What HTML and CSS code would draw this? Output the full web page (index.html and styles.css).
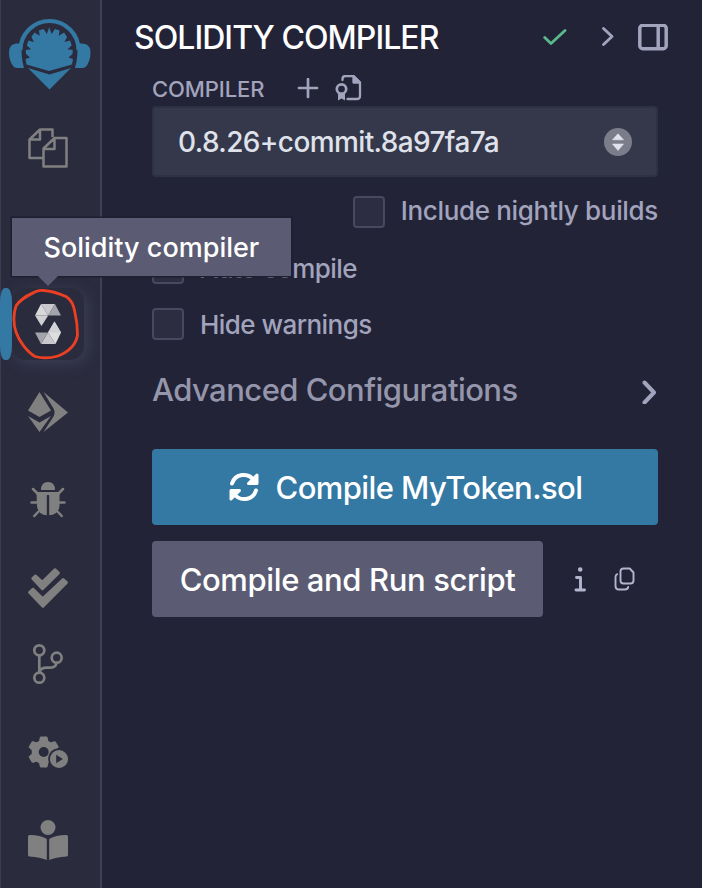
FILE: index.html
```html
<!DOCTYPE html>
<html lang="en">
<head>
<meta charset="utf-8">
<title>Solidity compiler</title>
<link rel="stylesheet" href="styles.css">
</head>
<body>
<div class="app">
  <nav class="rail">
    <div class="logo">
      <svg width="84" height="72" viewBox="7 18 84 72">
        <path d="M20.500 50a29 29 0 0 1 58 0" fill="none" stroke="#3478a4" stroke-width="4.200"/>
        <path d="M22 43.500h-5.500q-7.500.5-7.500 9t4.500 14q1.500 1.500 4 1.500H24q-3.500-12-2-24.500zM77 43.500h5.500q8 .5 8 9t-4.500 14q-1.500 1.500-4 1.500h-7q3.500-12 2-24.500z" fill="#3478a4"/>
        <path d="M26.500 64.500 25.500 59l4.500-1.500-4-3.500-.3-4 5.300-.8-4.200-3.700 1.600-5 5.600 1.600-2.600-5 3-4.600 5.300 3.300-.8-5.300 4.600-1.600 3.400 5 2.300-6.600 2.400 6.600 3.400-5 4.600 1.600-.8 5.300 5.300-3.300 3 4.600-2.600 5 5.600-1.600 1.600 5-4.200 3.700 5.300.8-.3 4-4 3.500 4.500 1.500-1 5.500-23 6.500z" fill="#3478a4"/>
        <path d="M28 68l21.500 6.500L71 68 49.500 89.500z" fill="#3478a4"/>
      </svg>
    </div>
    <div class="tool">
      <svg width="44" height="44" viewBox="26 126 44 44" fill="none" stroke="#808080" stroke-width="2.500" stroke-linejoin="round">
        <path d="M43 158H29.500V139.500L40 129.500h12.500V137M40 129.500v10H29.500M54.500 138h12v28.500H43.500V148.500zM54.500 138v11H43.500"/>
      </svg>
    </div>
    <div class="tool"></div>
    <div class="tool tool-active">
      <svg class="solidity" width="28" height="42" viewBox="34 303 28 42">
        <path d="M41 304h14l-6.800 11.500z" fill="#c9c9cd"/><path d="M41 304l-6 11.500h13.200z" fill="#d9d9dc"/><path d="M55 304l6 11.500H48.200z" fill="#a3a3aa"/><path d="M35 315.500h13.200L41.500 326z" fill="#d0d0d3"/>
        <path d="M41 344h14.500L48 332.500z" fill="#c9c9cd"/><path d="M54.500 321.500 61 332.500 55.500 344 48 332.500z" fill="#dedee1"/><path d="M54.500 321.500 61 332.500H48z" fill="#d2d2d6"/><path d="M35 332.500h13L41 344z" fill="#a3a3aa"/>
      </svg>
      <svg class="ring" width="70" height="74" viewBox="10 287 70 74" fill="none" stroke="#ed4023" stroke-width="2.800"><path d="M43 290.500C50 291 59 294 65 296.500C71 300 73 306 74 313C75.500 319 76.500 326 76.500 335C75 345 67 352 57 356C50 358 41 358.500 34 356.500C26 352 18 341 15 332C12 324 12.500 313 15 306C20 298 28 295 35 291.500Q39 290 43 290.500z"/></svg>
      <div class="tooltip">Solidity compiler</div>
    </div>
    <div class="tool">
      <svg width="42" height="42" viewBox="27 391 42 42" fill="#808080">
        <path d="M39.500 392 51 410.500 39.500 417 28 410.500zM28 416l11.500 6.500L51 416 39.500 432zM43.500 392 68 412.500 43.500 432 53.500 416.500q2-4 0-8z"/>
      </svg>
    </div>
    <div class="tool">
      <svg width="38" height="38" viewBox="29 480 38 38" fill="#808080">
        <path d="M41 489q0-8 7-8t7 8zM36.500 491H47v23.300q-9-.3-10-9.300zM49 491h10.500v14q-1 9-10.500 9.300z"/>
        <path d="M37 492l-4-4M59 492l4-4M37 501.500h-5.500M59 501.500h5.500M38 511l-3.700 4M58 511l3.700 4" fill="none" stroke="#808080" stroke-width="2.500" stroke-linecap="round"/>
        <path d="M36.500 491h23v3h-23z"/><path d="M46.800 494.500h2.400v20.500h-2.400z" fill="#2a2b3d"/>
      </svg>
    </div>
    <div class="tool">
      <svg width="44" height="44" viewBox="26 566 44 44" fill="#808080" stroke="#808080" stroke-width="2.500" stroke-linejoin="round">
        <path d="M32.500 578.500l3-2.800 6.800 6.300 12.700-12.500 3.700 3.500-16.300 16.200zM29.300 592.500l3.700-3.500 9.700 9.300L63 579.300l3.700 3.200-23.800 24.200z"/>
      </svg>
    </div>
    <div class="tool tool-short">
      <svg width="34" height="44" viewBox="31 642 34 44" fill="none" stroke="#808080" stroke-width="2.700">
        <circle cx="39.300" cy="650.300" r="5"/><circle cx="39.300" cy="677.700" r="5"/><circle cx="56.700" cy="657.700" r="5"/><path d="M39.300 655.300v17.500M56.700 662.700q-1 5-7 5h-3q-6 0-7 4"/>
      </svg>
    </div>
    <div class="tool">
      <svg width="42" height="34" viewBox="27 735 42 34">
        <circle cx="43.700" cy="752" r="12" fill="#808080"/>
        <path d="M41.200 738h5l1 5h-7zM41.200 766h5l1-5h-7zM30.300 747l2.500-4.300 4.800 1.700-3.500 6zM57.100 747l-2.500-4.300-4.800 1.700 3.500 6zM30.300 757l2.500 4.300 4.800-1.700-3.500-6z" fill="#808080" stroke="#808080" stroke-width="3" stroke-linejoin="round"/>
        <circle cx="43.700" cy="752" r="5" fill="#2a2b3d"/><circle cx="59" cy="759" r="10.800" fill="#2a2b3d"/><circle cx="59" cy="759" r="9" fill="#808080"/><path d="M56.200 754.700v8.600l6.600-4.300z" fill="#2a2b3d"/>
      </svg>
    </div>
    <div class="tool">
      <svg width="42" height="42" viewBox="27 819 42 42" fill="#808080">
        <circle cx="48" cy="827.500" r="7.500"/><path d="M28 836.500q0-1.500 1.500-1.500 11 .2 17.300 4v21Q40 857 29.500 856.500q-1.500 0-1.500-1.500zM68 836.500q0-1.500-1.500-1.500-11 .2-17.300 4v21q6.800-3 17.300-3.500 1.500 0 1.500-1.500z"/>
      </svg>
    </div>
  </nav>

  <main class="panel">
    <header class="head">
      <h1 class="title">SOLIDITY COMPILER</h1>
      <div class="head-icons">
        <svg width="24" height="18" viewBox="0 0 24 18" fill="none" stroke="#5bb98c" stroke-width="2.800" stroke-linecap="round" stroke-linejoin="round"><path d="M1.700 9.500 8 15.500 22 2.500"/></svg>
        <svg width="14" height="22" viewBox="0 0 14 22" fill="none" stroke="#a2a3bd" stroke-width="2.900" stroke-linecap="round" stroke-linejoin="round"><path d="M2.500 2.500l8.500 8-8.500 8"/></svg>
        <svg width="30" height="27" viewBox="0 0 30 27" fill="none" stroke="#a2a3bd" stroke-width="3.500"><rect x="1.800" y="1.300" width="26.400" height="23.400" rx="3"/><path d="M20.200 2v22"/></svg>
      </div>
    </header>
    <section class="body">
      <div class="label-row">
        <span class="label">COMPILER</span>
        <svg class="plus" width="22" height="22" viewBox="0 0 22 22" fill="none" stroke="#a2a3bd" stroke-width="2.700" stroke-linecap="round"><path d="M11 1v18M2 10h18"/></svg>
        <svg class="cert" width="28" height="28" viewBox="334 75 28 28" fill="none" stroke="#a2a3bd" stroke-width="2.300" stroke-linecap="round" stroke-linejoin="round"><path d="M342.500 80v-1q0-3 3-3h8l6.500 6.500V96q0 3-3 3h-9.500"/><path d="M353.500 76v6.500h6.500z" fill="#a2a3bd"/><circle cx="341.500" cy="89" r="4.700" stroke-width="2.700"/><path d="M338 94v6.500l3.500-2 3.500 2V94z" fill="#a2a3bd" stroke="none"/></svg>
      </div>
      <div class="select">
        <span>0.8.26+commit.8a97fa7a</span>
        <svg width="28" height="28" viewBox="0 0 28 28"><circle cx="14" cy="14" r="14" fill="#7c7d8b"/><path d="M8.500 11.800h11L14 5.800zM8.500 16h11L14 22.500z" fill="#e0e3ec" stroke="#e0e3ec" stroke-width=".6" stroke-linejoin="round"/></svg>
      </div>
      <div class="check check-right"><i class="box"></i><span class="nightly">Include nightly builds</span></div>
      <div class="check"><i class="box"></i><span>Auto compile</span></div>
      <div class="check"><i class="box"></i><span>Hide warnings</span></div>
      <div class="advanced">
        <span>Advanced Configurations</span>
        <svg width="18" height="26" viewBox="0 0 18 26" fill="none" stroke="#a2a3bd" stroke-width="4" stroke-linecap="round" stroke-linejoin="round"><path d="M4.500 4.500l9.500 10-9.500 10"/></svg>
      </div>
      <div class="btn btn-primary">
        <svg width="32" height="30" viewBox="0 0 32 30" fill="none" stroke="#fff" stroke-width="4" stroke-linecap="round" stroke-linejoin="round"><path d="M4 11.500A12.300 12.300 0 0 1 26 8.500M28 18.500A12.300 12.300 0 0 1 6 21.500"/><path d="M29 3v8.500H20.500zM3 27v-8.500h8.500z" fill="#fff" stroke-width="3"/></svg>
        <span>Compile MyToken.sol</span>
      </div>
      <div class="run-row">
        <div class="btn btn-secondary"><span>Compile and Run script</span></div>
        <svg class="info" width="12" height="26" viewBox="0 0 12 26" fill="none" stroke="#b3b4cd" stroke-width="2.900" stroke-linecap="round" stroke-linejoin="round"><circle cx="6.200" cy="3.500" r="1.300" fill="#b3b4cd" stroke-width="2"/><path d="M2.500 11.500h4v12M2 24h8.500"/></svg>
        <svg class="copy" width="22" height="24" viewBox="0 0 22 24" fill="none" stroke="#b3b4cd" stroke-width="1.900" stroke-linejoin="round" stroke-linecap="round"><path d="M9.500 1.500h6.200L19.500 5.500v8q0 3-3 3H9.500q-3 0-3-3V4.500q0-3 3-3z"/><path d="M3.200 7.200Q1.500 8 1.500 10v9q0 3.500 3.300 3.500h6.200q2.700 0 3.200-2.500"/></svg>
      </div>
    </section>
  </main>
</div>
</body>
</html>
```
FILE: styles.css
```css
* { box-sizing: border-box; }
body { margin: 0; background: #222336; font-family: Inter, "Liberation Sans", sans-serif; font-weight: 450; }
svg { display: block; flex: none; }
.app { display: flex; width: 702px; height: 888px; overflow: hidden; }
.rail { width: 102px; flex: none; background: #2a2b3d; border-left: 1px solid #3b3c50; border-right: 2px solid #3f4055; padding-right: 5px; }
.logo { height: 104px; padding-top: 18px; padding-left: 6px; }
.tool { height: 88px; display: flex; align-items: center; justify-content: center; }
.tool-short { height: 76px; padding-bottom: 12px; }
.tool-active { position: relative; }
.tool-active::before { content: ""; position: absolute; left: 11px; top: 8px; width: 72px; height: 72px; border-radius: 14px; background: #2a2b3d; box-shadow: 3px 3px 16px rgba(110, 112, 145, .3); }
.tool-active::after { content: ""; position: absolute; left: -1px; top: 8px; width: 12px; height: 72px; border-radius: 5px / 14px; background: #3478a4; }
.solidity { position: relative; }
.ring { position: absolute; left: 10px; top: 7px; z-index: 2; }
.tooltip { position: absolute; z-index: 3; left: 11px; top: -62px; width: 279px; height: 58px; background: #5b5c73; color: #fff; font-size: 27px; letter-spacing: 0; line-height: 60px; padding-left: 31.500px; white-space: nowrap; box-shadow: 0 0 0 1.500px #1e1f30; }
.tooltip::after { content: ""; position: absolute; left: 26px; top: 58px; border: 10px solid transparent; border-bottom: 0; border-top-color: #5b5c73; }
.panel { flex: 1; }
.head { height: 74px; padding: 0 34px 0 32px; display: flex; align-items: center; justify-content: space-between; }
.title { margin: 0; font-size: 32px; font-weight: 450; letter-spacing: -.95px; color: #fff; white-space: nowrap; }
.head-icons { display: flex; align-items: center; }
.head-icons svg:nth-child(1) { margin-right: 34px; }
.head-icons svg:nth-child(2) { margin-right: 23px; }
.body { padding: 0 44px 0 50px; color: #a2a3bd; white-space: nowrap; }
.label-row { display: flex; align-items: center; height: 32px; padding-bottom: 3px; }
.label { font-size: 22px; width: 145px; letter-spacing: -.1px; }
.cert { margin-left: 15px; }
.select { height: 71px; background: #35374a; border: 2px solid #2d3144; border-radius: 4px; display: flex; align-items: center; justify-content: space-between; padding: 0 24px; font-size: 28px; letter-spacing: -.62px; color: #dfe2ea; }
.check { height: 32px; margin-bottom: 24px; display: flex; align-items: center; gap: 16px; font-size: 26px; letter-spacing: -.55px; }
.check-right { justify-content: flex-end; margin-top: 19px; letter-spacing: -.33px; }
.check-right .nightly { padding-bottom: 4px; }
.box { width: 32px; height: 32px; flex: none; background: #2c2d40; border: 2px solid #484960; border-radius: 4px; }
.advanced { height: 53px; display: flex; align-items: center; justify-content: space-between; font-size: 31px; letter-spacing: -.54px; color: #9596ab; }
.advanced span { padding-bottom: 2px; }
.btn { height: 76px; border-radius: 4px; display: flex; align-items: center; justify-content: center; color: #fff; font-size: 31px; letter-spacing: -.6px; }
.btn-primary { background: #3478a4; gap: 16px; margin-top: 32px; }
.run-row { display: flex; align-items: center; margin-top: 16px; }
.btn-secondary { width: 391px; background: #5b5c73; letter-spacing: -.38px; }
.info { margin-left: 31px; }
.copy { margin-left: 28px; }
```
